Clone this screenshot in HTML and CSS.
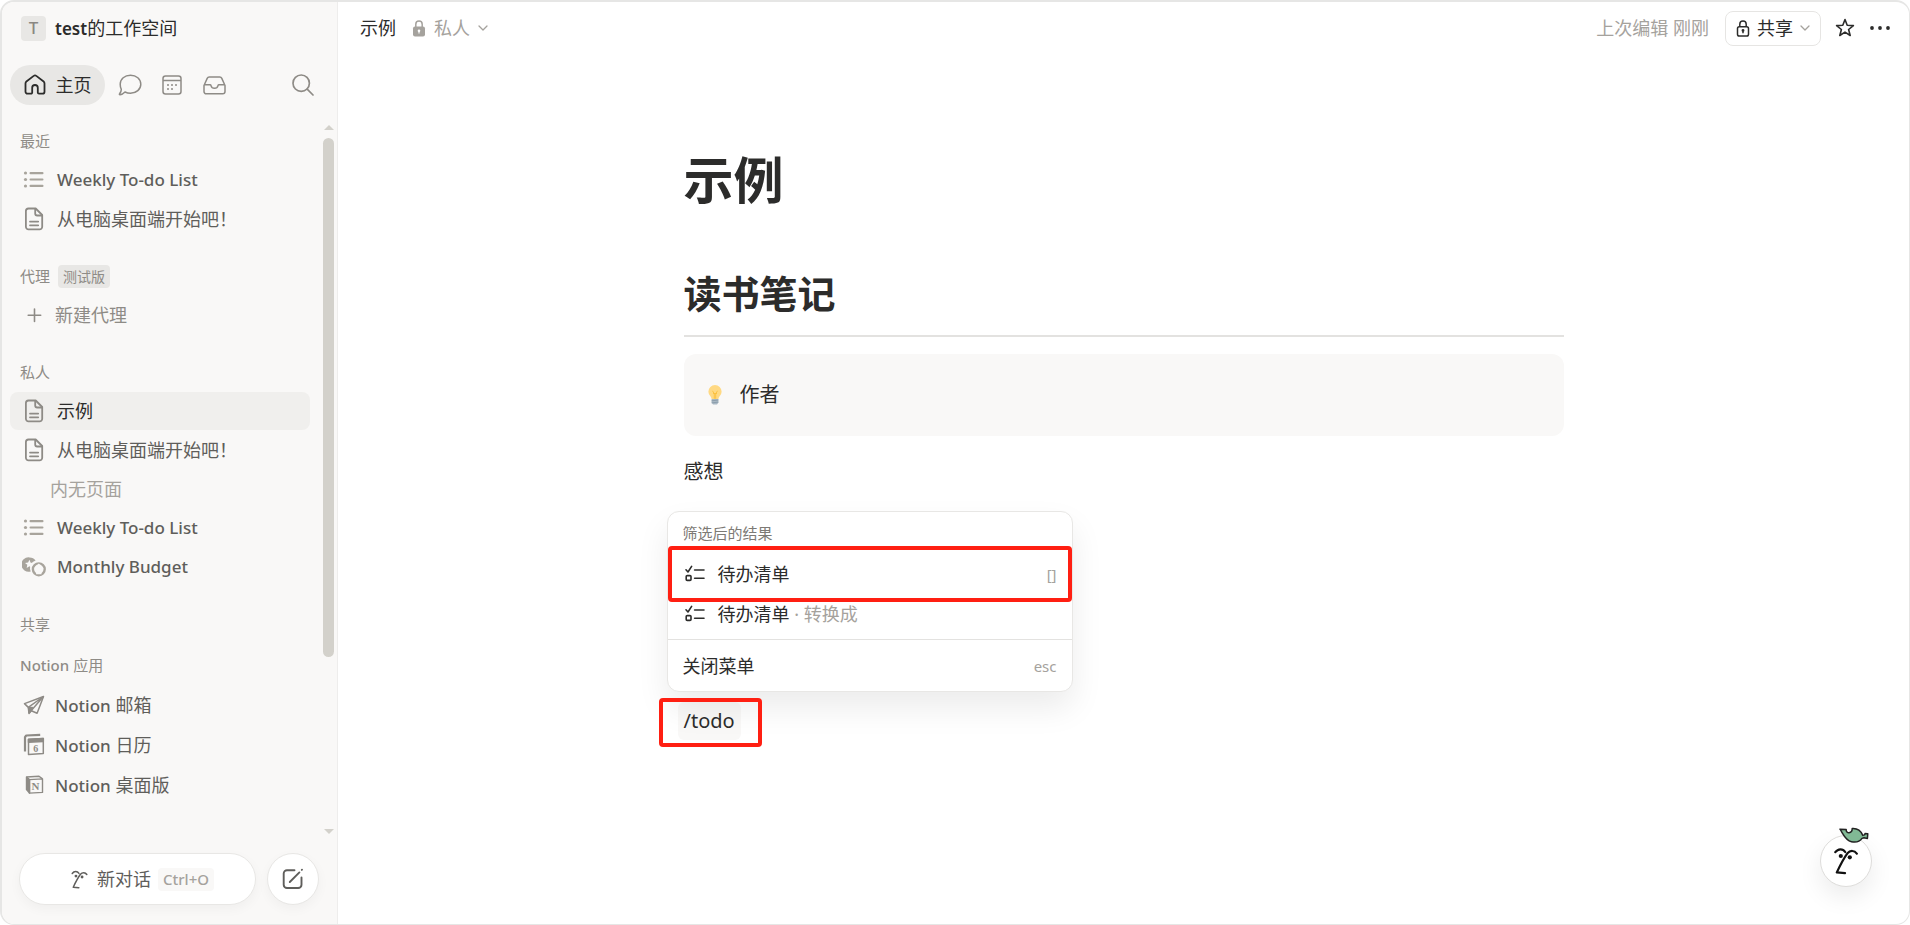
FILE: index.html
```html
<!DOCTYPE html>
<html lang="zh-CN">
<head>
    <meta charset="UTF-8">
    <meta name="viewport" content="width=device-width, initial-scale=1.0">
    <title>示例</title>
    <link rel="stylesheet" href="styles.css">
</head>
<body>
    <!-- shared icons -->
    <svg class="sprite" width="0" height="0" aria-hidden="true">
        <symbol id="icon-list" viewBox="0 0 22 22">
            <g fill="currentColor">
                <circle cx="2.5" cy="4" r="1.6"/><circle cx="2.5" cy="10.5" r="1.6"/><circle cx="2.5" cy="17" r="1.6"/>
                <rect x="6.5" y="3" width="14" height="2.2" rx="1"/><rect x="6.5" y="9.4" width="14" height="2.2" rx="1"/><rect x="6.5" y="15.8" width="14" height="2.2" rx="1"/>
            </g>
        </symbol>
        <symbol id="icon-page" viewBox="0 0 22 24">
            <g fill="none" stroke="currentColor" stroke-width="1.8" stroke-linecap="round" stroke-linejoin="round">
                <path d="M5.500 1.500h7.200l6.500 6.500v11.800a2.600 2.600 0 0 1-2.600 2.600H5.500a2.600 2.600 0 0 1-2.600-2.600V4.100A2.600 2.600 0 0 1 5.500 1.500z"/>
                <path d="M12.200 1.800v4.700a2 2 0 0 0 2 2h4.700M7 14.600h8.200M7 18.300h8.200"/>
            </g>
        </symbol>
        <symbol id="icon-todo" viewBox="0 0 20 18">
            <g fill="none" stroke="currentColor" stroke-width="1.6" stroke-linecap="round" stroke-linejoin="round">
                <path d="M1 4.800 3 7l3.600-5.600M9.600 5h9.400M9.600 13.200h9.400"/>
                <rect x="1.200" y="10.600" width="4.800" height="4.800" rx="1"/>
            </g>
        </symbol>
        <symbol id="icon-chevron" viewBox="0 0 10 6">
            <path d="M1 1l4 4 4-4" fill="none" stroke="currentColor" stroke-width="1.3" stroke-linecap="round" stroke-linejoin="round"/>
        </symbol>
        <symbol id="icon-face" viewBox="0 0 24 28">
            <g fill="none" stroke="currentColor" stroke-width="2.2" stroke-linecap="round" stroke-linejoin="round">
                <path d="M1.300 5.200C4 1.400 8.800 1.300 11.200 5"/>
                <path d="M22.800 6.600C20.400 3.300 16.300 3 13.400 6.300 9.600 11.500 6 18.500 2.800 25.400l8.200.8"/>
            </g>
            <circle cx="6.800" cy="9" r="2.100" fill="currentColor"/>
            <circle cx="15.800" cy="10.300" r="2.100" fill="currentColor"/>
        </symbol>
    </svg>

    <div class="app">
        <aside class="sidebar">
            <button class="workspace" type="button">
                <span class="workspace-icon">T</span>
                <span class="workspace-name"><b>test</b>的工作空间</span>
            </button>

            <div class="tabs">
                <button class="tab active" type="button">
                    <svg width="22" height="22" viewBox="0 0 22 22" fill="none" stroke="currentColor" stroke-width="1.8" stroke-linejoin="round"><path d="M1.500 9.400c0-.8.300-1.400.9-1.900l7.300-5.600a2 2 0 0 1 2.600 0l7.300 5.600c.6.500.9 1.100.9 1.900v8.300a2 2 0 0 1-2 2H15a1.200 1.200 0 0 1-1.200-1.200V13.800a2.800 2.800 0 0 0-5.600 0v4.700A1.200 1.200 0 0 1 7 19.700H3.500a2 2 0 0 1-2-2z"/></svg>
                    主页
                </button>
                <button class="tab" type="button" aria-label="聊天">
                    <svg width="24" height="22" viewBox="0 0 24 22" fill="none" stroke="currentColor" stroke-width="1.500" stroke-linejoin="round"><path d="M12.500 1.200c5.800 0 10.300 3.900 10.300 9s-4.500 9.100-10.300 9.100c-2 0-3.900-.5-5.500-1.300-1.400 1.400-3 2.500-5 2.700-.6 0-.8-.5-.4-1 .9-1.200 1.700-2.900 1.700-4.300-.7-1.500-1.100-3.300-1.100-5.200 0-5.100 4.500-9 10.300-9z"/></svg>
                </button>
                <button class="tab" type="button" aria-label="日历">
                    <svg width="20" height="20" viewBox="0 0 20 20" fill="none" stroke="currentColor" stroke-width="1.500"><rect x="1" y="1" width="18" height="18" rx="2.500"/><path d="M1 5.600h18"/><g fill="currentColor" stroke="none"><circle cx="10" cy="10" r="1"/><circle cx="14" cy="10" r="1"/><circle cx="6" cy="10" r="1"/><circle cx="6" cy="14" r="1"/><circle cx="10" cy="14" r="1"/></g></svg>
                </button>
                <button class="tab" type="button" aria-label="收件箱">
                    <svg width="23" height="19" viewBox="0 0 23 19" fill="none" stroke="currentColor" stroke-width="1.500" stroke-linejoin="round"><path d="M1 9.500 4.200 2.400A2.300 2.300 0 0 1 6.300 1h10.400a2.300 2.300 0 0 1 2.100 1.400L22 9.500v6a2.300 2.300 0 0 1-2.300 2.300H3.300A2.300 2.300 0 0 1 1 15.500zM1 8.800h6c.5 0 .9.300 1 .8a3.600 3.600 0 0 0 7 0c.1-.5.5-.8 1-.8h6"/></svg>
                </button>
                <button class="tab search" type="button" aria-label="搜索">
                    <svg width="22" height="22" viewBox="0 0 22 22" fill="none" stroke="currentColor" stroke-width="1.700" stroke-linecap="round"><circle cx="9.200" cy="9.200" r="8.200"/><path d="M15.200 15.200 21 21"/></svg>
                </button>
            </div>

            <div class="scroll-area">
                <nav class="nav">
                    <section class="group">
                        <h2 class="group-title">最近</h2>
                        <a class="item" href="#"><svg class="icon tan"><use href="#icon-list"/></svg><b>Weekly To-do List</b></a>
                        <a class="item" href="#"><svg class="icon"><use href="#icon-page"/></svg>从电脑桌面端开始吧！</a>
                    </section>
                    <section class="group">
                        <h2 class="group-title">代理 <span class="badge">测试版</span></h2>
                        <a class="item muted" href="#"><svg class="icon" viewBox="0 0 22 22" fill="none" stroke="currentColor" stroke-width="1.600" stroke-linecap="round"><path d="M11.500 5v12.500M5.200 11.200h12.500"/></svg>新建代理</a>
                    </section>
                    <section class="group">
                        <h2 class="group-title">私人</h2>
                        <a class="item current" href="#"><svg class="icon"><use href="#icon-page"/></svg>示例</a>
                        <a class="item" href="#"><svg class="icon"><use href="#icon-page"/></svg>从电脑桌面端开始吧！</a>
                        <p class="item empty">内无页面</p>
                        <a class="item" href="#"><svg class="icon tan"><use href="#icon-list"/></svg><b>Weekly To-do List</b></a>
                        <a class="item coins" href="#">
                            <svg class="icon tan" viewBox="0 0 24 20"><path d="M7.600.4a7.200 7.200 0 0 1 6 3.200 8 8 0 0 0-4.900 10.800A7.200 7.200 0 1 1 7.600.4z" fill="currentColor"/><path d="M7.400 2.800l1.300 2.900 3 .3-2.300 2 .2 2.500-2.200-1.200-2.700 1.600.6-3.100L3 5.900l3.100-.3z" fill="#f9f8f7"/><circle cx="16.800" cy="12.300" r="5.900" fill="none" stroke="currentColor" stroke-width="2.400"/><path d="M16.800 6.400l5 5.200h-2.300v5.600h-5.400v-5.600h-2.300z" fill="#f9f8f7"/></svg>
                            <b>Monthly Budget</b>
                        </a>
                    </section>
                    <section class="group">
                        <h2 class="group-title">共享</h2>
                    </section>
                    <section class="group apps">
                        <h2 class="group-title"><b>Notion</b> 应用</h2>
                        <a class="item" href="#">
                            <svg class="icon" viewBox="0 0 22 22" fill="none" stroke="currentColor" stroke-width="1.500" stroke-linejoin="round"><path d="M20.500 2.500 1.500 9.600l3.800 3.800.7 6 2.300-2.700 5.800 2.600z"/><path d="M20.500 2.500 5.300 13.400M20 3 8.300 16.500" /><path d="M5.600 13.800l.4 5 2.300-2.200 1.200-3z" fill="currentColor"/></svg>
                            <span><b>Notion</b> 邮箱</span>
                        </a>
                        <a class="item" href="#">
                            <svg class="icon" viewBox="0 0 22 22" fill="none" stroke="currentColor" stroke-width="1.500" stroke-linejoin="round"><path d="M2 17.500V3.200L3.200 1.500l14-.6" stroke-width="2.200"/><path d="M5.500 5.400l14.800-.8v15l-14.800.9z"/><path d="M5.500 5.200l14.800-.8v3l-14.800.8z" fill="currentColor"/><text class="calendar-day" x="10.300" y="17.600">6</text></svg>
                            <span><b>Notion</b> 日历</span>
                        </a>
                        <a class="item" href="#">
                            <svg class="icon" viewBox="0 0 22 22" fill="none" stroke="currentColor" stroke-width="1.400" stroke-linejoin="round"><path d="M6.500 5.600l13-.7v13.500l-13 .7z"/><path d="M3.500 3l3 2.600v13.500l-3-3.500z" fill="currentColor"/><path d="M3.500 3l12.500-.8 3.500 2.700"/><text class="notion-mark" x="8.600" y="16.300">N</text></svg>
                            <span><b>Notion</b> 桌面版</span>
                        </a>
                    </section>
                </nav>
                <div class="scrollbar" aria-hidden="true">
                    <span class="arrow up"></span>
                    <div class="track"><div class="thumb"></div></div>
                    <span class="arrow down"></span>
                </div>
            </div>

            <div class="sidebar-footer">
                <button class="new-chat" type="button">
                    <svg width="17" height="19"><use href="#icon-face"/></svg>
                    新对话
                    <kbd>Ctrl+O</kbd>
                </button>
                <button class="compose" type="button" aria-label="新页面">
                    <svg width="22" height="22" viewBox="0 0 22 22" fill="none" stroke="currentColor" stroke-width="1.900" stroke-linecap="round"><path d="M12.500 2.200H5A3.300 3.300 0 0 0 1.700 5.500v11.200A3.300 3.300 0 0 0 5 20h11.200a3.300 3.300 0 0 0 3.300-3.300V9.500M7.800 14 17.400 4.400M19.800 1.900l.2-.2"/></svg>
                </button>
            </div>
        </aside>

        <div class="main">
            <header class="topbar">
                <a class="crumb" href="#">示例</a>
                <button class="privacy" type="button">
                    <svg width="14" height="17" viewBox="0 0 14 17"><rect x="1" y="6.500" width="12" height="10" rx="2" fill="currentColor"/><path d="M3.800 7V4.300a3.200 3.200 0 0 1 6.400 0V7" fill="none" stroke="currentColor" stroke-width="1.500"/><circle cx="7" cy="10.700" r="1.300" fill="#fff"/><path d="M7 11v2.500" stroke="#fff" stroke-width="1.100"/></svg>
                    私人
                    <svg class="chevron" width="10" height="6"><use href="#icon-chevron"/></svg>
                </button>
                <span class="edited">上次编辑 刚刚</span>
                <button class="share" type="button">
                    <svg width="14" height="17" viewBox="0 0 14 17" fill="none" stroke="currentColor" stroke-width="1.500"><rect x="1.500" y="6.700" width="11" height="9.300" rx="1.800"/><path d="M3.800 6.700V4.300a3.200 3.200 0 0 1 6.400 0v2.400M7 10.500v2.800"/><circle cx="7" cy="10.400" r=".7"/></svg>
                    共享
                    <svg class="chevron" width="10" height="6"><use href="#icon-chevron"/></svg>
                </button>
                <button class="tool" type="button" aria-label="收藏">
                    <svg width="20" height="20" viewBox="0 0 20 20" fill="none" stroke="currentColor" stroke-width="1.600" stroke-linejoin="round"><path d="M10 1.500l2.200 5.800 6.200.3-4.800 3.900 1.600 6-5.200-3.400-5.200 3.400 1.600-6L1.600 7.600l6.200-.3z"/></svg>
                </button>
                <button class="tool" type="button" aria-label="更多">
                    <svg width="22" height="6" viewBox="0 0 22 6" fill="currentColor"><circle cx="3" cy="3" r="1.900"/><circle cx="11" cy="3" r="1.900"/><circle cx="19" cy="3" r="1.900"/></svg>
                </button>
            </header>

            <main class="page">
                <h1 class="page-title">示例</h1>
                <h2 class="heading">读书笔记</h2>
                <hr class="divider">
                <div class="callout">
                    <svg width="14" height="20" viewBox="0 0 14 20"><path d="M7 0a6.600 6.600 0 0 1 6.600 6.600c0 2.600-1.500 4-2.500 5.300-.4.600-.6 1.300-.7 2.100H3.600c-.1-.8-.3-1.500-.7-2.100-1-1.300-2.500-2.700-2.500-5.300A6.600 6.600 0 0 1 7 0z" fill="#ffd983"/><path d="M4.500 5.800l1.800 3v5M9.500 5.800l-1.800 3v5M5 8.500h4" fill="none" stroke="#fbbf3c" stroke-width=".9"/><path d="M3.600 14h6.800v3.600L9 19.500H5l-1.400-1.900z" fill="#a9b8c4"/><path d="M3.600 15.800l6.800-.8M3.600 17.900l6.800-.8" stroke="#7f92a1" stroke-width=".7"/></svg>
                    <span>作者</span>
                </div>
                <p class="paragraph">感想</p>

                <!-- slash command menu -->
                <div class="slash-menu">
                    <h3 class="menu-title">筛选后的结果</h3>
                    <button class="menu-item marked" type="button">
                        <svg width="20" height="18"><use href="#icon-todo"/></svg>
                        <span>待办清单</span>
                        <kbd>[]</kbd>
                    </button>
                    <button class="menu-item" type="button">
                        <svg width="20" height="18"><use href="#icon-todo"/></svg>
                        <span>待办清单 <small>· 转换成</small></span>
                    </button>
                    <button class="menu-item close" type="button">
                        <span>关闭菜单</span>
                        <kbd>esc</kbd>
                    </button>
                </div>
                <p class="command"><span class="command-text marked">/todo</span></p>
            </main>

            <button class="assistant" type="button" aria-label="助手">
                <svg class="assistant-face" width="24" height="28"><use href="#icon-face"/></svg>
                <svg class="assistant-leaf" width="30" height="18" viewBox="0 0 30 18"><path d="M1 2.200l6.200.3c-.4 4.300 6 4.600 6-.9 5-.4 8.600 2.200 10.600 6.800l1.800-.5.4-1.300 2.800.2-.4 4.600-3.400-.6-2 .6c-2.300 3.300-6.300 4.200-10.600 3.300C6.600 13.500 4.400 7.400 1 2.200z" fill="#81b995" stroke="#222" stroke-width="1.500" stroke-linejoin="round"/></svg>
            </button>
        </div>
    </div>
</body>
</html>
```

FILE: styles.css
```css
* {
    box-sizing: border-box;
}
body {
    margin: 0;
    font-family: "Noto Sans", "Noto Sans CJK SC", sans-serif;
    font-size: 18px;
    line-height: 24px;
    color: #2c2c2b;
    background: #fff;
}
h1, h2, h3, p {
    margin: 0;
}
button {
    font: inherit;
    color: inherit;
    border: none;
    background: none;
    padding: 0;
    cursor: pointer;
}
a {
    color: inherit;
    text-decoration: none;
}
b {
    font-size: 17px;
    font-weight: 500;
}
svg {
    flex: none;
}
.sprite {
    position: absolute;
}
.app {
    display: flex;
    min-height: 100vh;
    border: 2px solid #e6e6e5;
    border-right-width: 1px;
    border-bottom-width: 1px;
    border-radius: 14px;
    overflow: hidden;
}

/* sidebar */
.sidebar {
    display: flex;
    flex-direction: column;
    flex: none;
    width: 336px;
    background: #f9f8f7;
    border-right: 1px solid #eeedec;
}
.workspace {
    display: flex;
    align-items: center;
    gap: 9px;
    height: 53px;
    padding-left: 19px;
}
.workspace-icon {
    width: 25px;
    height: 25px;
    border-radius: 4px;
    background: #e8e7e5;
    color: #8a8782;
    font-size: 17px;
    font-weight: 500;
}
.workspace-name b {
    font-weight: 600;
}
.tabs {
    display: flex;
    align-items: center;
    height: 40px;
    margin: 10px 8px 17px;
    color: #8e8b86;
}
.tab {
    display: flex;
    align-items: center;
    justify-content: center;
    width: 42px;
    height: 40px;
    border-radius: 20px;
}
.tab.active {
    gap: 10px;
    width: 95px;
    margin-right: 4px;
    background: #e8e7e5;
    color: #2c2c2b;
}
.tab.search {
    margin-left: auto;
    margin-right: 5px;
}
.scroll-area {
    display: flex;
    flex: 1;
}
.nav {
    flex: 1;
    padding: 0 12px 0 8px;
}
.group {
    display: flex;
    flex-direction: column;
    gap: 1px;
    margin-bottom: 19px;
}
.group.apps {
    gap: 2px;
    margin-top: -16px;
}
.group-title {
    display: flex;
    align-items: center;
    gap: 8px;
    height: 38px;
    padding-left: 10px;
    font-size: 15px;
    font-weight: 400;
    color: #8e8b86;
}
.apps .group-title {
    gap: 4px;
}
.group-title b {
    font-size: 15px;
}
.badge {
    padding: 0 5px;
    border-radius: 4px;
    background: #e8e7e5;
    font-size: 14px;
    line-height: 23px;
}
.item {
    display: flex;
    align-items: center;
    gap: 12px;
    height: 38px;
    padding-left: 13px;
    border-radius: 8px;
    color: #5f5e5b;
}
.item.current {
    background: #f0efed;
    color: #2c2c2b;
}
.item.muted {
    gap: 10px;
    color: #8e8b86;
}
.apps .item {
    gap: 10px;
}
.item.empty {
    padding-left: 40px;
    color: #a5a29d;
}
.icon {
    width: 22px;
    height: 24px;
    color: #8e8b86;
}
.icon.tan {
    color: #a8a49c;
}
.item.coins {
    gap: 11px;
    padding-left: 12px;
}
.coins .icon {
    width: 24px;
}
.calendar-day {
    fill: currentColor;
    stroke: none;
    font: bold 10px "Liberation Serif", serif;
}
.notion-mark {
    fill: currentColor;
    stroke: none;
    font: bold 11px "Liberation Serif", serif;
}
.scrollbar {
    display: flex;
    flex-direction: column;
    align-items: center;
    gap: 8px;
    width: 15px;
    padding: 3px 2px 3px 0;
}
.track {
    flex: 1;
    width: 11px;
}
.thumb {
    height: 76%;
    border-radius: 6px;
    background: #d3d1cb;
}
.arrow {
    border: 5px solid transparent;
}
.arrow.up {
    border-top: none;
    border-bottom-color: #d3d1cb;
}
.arrow.down {
    border-bottom: none;
    border-top-color: #d3d1cb;
}
.sidebar-footer {
    display: flex;
    gap: 11px;
    padding: 16px 18px 19px 17px;
    color: #5f5e5b;
}
.new-chat,
.compose {
    display: flex;
    align-items: center;
    justify-content: center;
    height: 52px;
    border: 1px solid #e8e7e5;
    border-radius: 26px;
    background: #fff;
    box-shadow: 0 4px 12px rgba(0,0,0,0.04);
}
.new-chat {
    flex: 1;
    gap: 9px;
    padding-left: 10px;
}
.new-chat kbd {
    margin-left: -2px;
    padding: 0 5px;
    border-radius: 4px;
    background: #f9f8f7;
    color: #a5a29d;
    font-family: inherit;
    font-size: 15px;
    font-weight: 500;
    line-height: 23px;
}
.compose {
    width: 52px;
}

/* main column */
.main {
    flex: 1;
    min-width: 0;
}
.topbar {
    display: flex;
    align-items: center;
    height: 52px;
    padding: 0 18px 0 22px;
}
.crumb {
    margin-right: 16px;
}
.privacy {
    display: flex;
    align-items: center;
    gap: 8px;
    color: #a5a29d;
}
.edited {
    margin-left: auto;
    margin-right: 16px;
    color: #a5a29d;
}
.share {
    display: flex;
    align-items: center;
    gap: 7px;
    height: 35px;
    padding: 0 10px;
    border: 1px solid #e6e5e3;
    border-radius: 8px;
}
.chevron {
    color: #a5a29d;
}
.tool {
    display: flex;
    align-items: center;
    margin-left: 14px;
}
.page {
    max-width: 880px;
    margin: 0 auto;
    padding-top: 90px;
    font-size: 20px;
}
.page-title {
    font-size: 50px;
    line-height: 72px;
    font-weight: 700;
}
.heading {
    margin-top: 52px;
    font-size: 38px;
    line-height: 50px;
    font-weight: 700;
}
.divider {
    height: 2px;
    margin: 17px 0 17px;
    border: none;
    background: #e3e2e0;
}
.callout {
    display: flex;
    align-items: center;
    gap: 18px;
    height: 82px;
    padding-left: 24px;
    border-radius: 12px;
    background: #f9f8f7;
}
.paragraph {
    margin-top: 21px;
    line-height: 30px;
}

/* slash menu */
.slash-menu {
    width: 406px;
    margin: 24px 0 0 -17px;
    border: 1px solid #e8e7e5;
    border-radius: 12px;
    background: #fff;
    box-shadow: 0 16px 32px rgba(0,0,0,0.08);
}
.menu-title {
    padding: 9px 15px;
    font-size: 15px;
    font-weight: 400;
    color: #7d7a75;
}
.menu-item {
    display: flex;
    align-items: center;
    gap: 13px;
    width: 100%;
    height: 40px;
    padding: 0 15px 0 17px;
    font-size: 18px;
}
.menu-item small {
    font-size: 18px;
    color: #a5a29d;
}
.menu-item kbd {
    margin-left: auto;
    font-family: inherit;
    font-size: 15px;
    color: #a5a29d;
}
.menu-item.close {
    height: 52px;
    margin-top: 5px;
    padding-left: 15px;
    border-top: 1px solid #e3e2e0;
}
.command {
    margin-left: -6px;
    padding-top: 10px;
    line-height: 38px;
}
.command-text {
    display: inline-block;
    padding: 0 6px;
    border-radius: 6px;
    background: rgba(66,35,3,0.03);
}

/* red callout frames */
.marked {
    position: relative;
}
.marked::after {
    content: "";
    position: absolute;
    inset: -8px 0;
    border: 4px solid #ff1f12;
    border-radius: 4px;
}
.command-text.marked::after {
    inset: -4px -21px -7px -19px;
}

/* floating assistant */
.assistant {
    position: fixed;
    right: 38px;
    bottom: 38px;
    display: flex;
    align-items: center;
    justify-content: center;
    width: 52px;
    height: 52px;
    border: 1px solid #dddcda;
    border-radius: 50%;
    background: #fff;
    box-shadow: 0 10px 24px rgba(0,0,0,0.08);
    color: #111;
}
.assistant-leaf {
    position: absolute;
    top: -9px;
    right: 2px;
}
```
